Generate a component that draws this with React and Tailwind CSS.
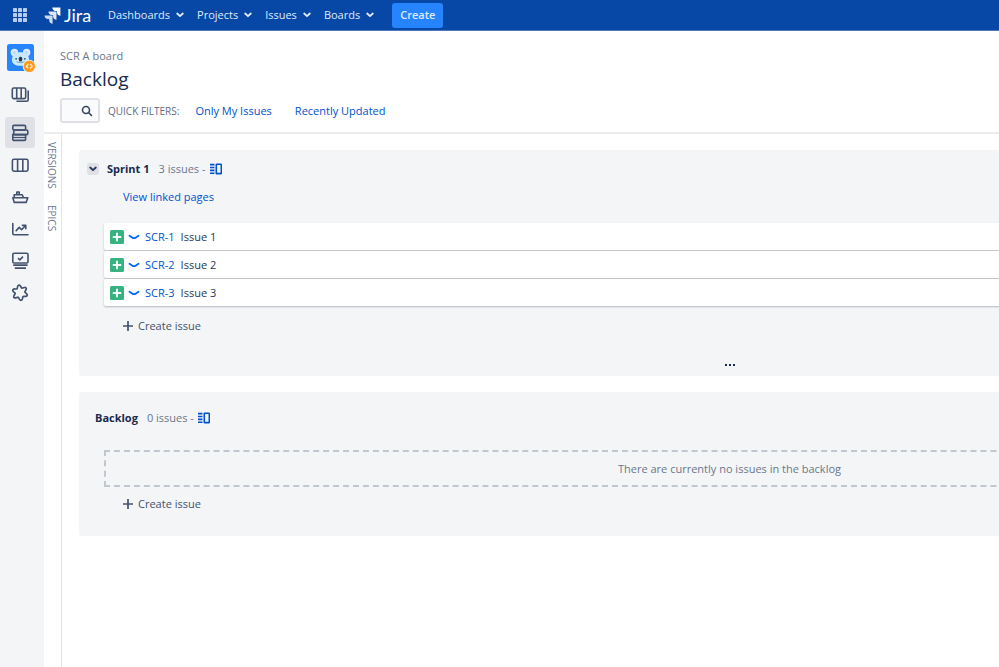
const navItems = ["Dashboards", "Projects", "Issues", "Boards"];

const issues = [
  { key: "SCR-1", title: "Issue 1" },
  { key: "SCR-2", title: "Issue 2" },
  { key: "SCR-3", title: "Issue 3" },
];

function Icon({ size = 20, className = "", children, ...rest }) {
  return (
    <svg
      width={size}
      height={size}
      viewBox={`0 0 ${size} ${size}`}
      fill="none"
      stroke="currentColor"
      aria-hidden="true"
      className={`shrink-0 ${className}`}
      {...rest}
    >
      {children}
    </svg>
  );
}

function AppSwitcherIcon() {
  return (
    <Icon size={16} stroke="none" fill="#b9cdf0">
      {[1, 6, 11].map((y) => [1, 6, 11].map((x) => <rect key={`${x}-${y}`} x={x} y={y} width="4" height="4" rx="0.4" />))}
    </Icon>
  );
}

function JiraMark() {
  return (
    <Icon size={17} stroke="none" fill="#ffffff">
      <path d="M8.3 0.5H16.4V8.7C14.5 8.7 13 7.2 13 5.4V4H11.6C9.8 4 8.3 2.4 8.3 0.5Z" />
      <path opacity="0.88" d="M4.4 4.5H12.5V12.7C10.6 12.7 9.1 11.2 9.1 9.4V8H7.7C5.9 8 4.4 6.4 4.4 4.5Z" />
      <path opacity="0.8" d="M0.5 8.5H8.6V16.7C6.7 16.7 5.2 15.2 5.2 13.4V12H3.8C2 12 0.5 10.4 0.5 8.5Z" />
    </Icon>
  );
}

function KoalaAvatar() {
  return (
    <Icon size={29} stroke="none">
      <rect x="0" y="0" width="27" height="27" rx="2.5" fill="#2684ff" />
      <circle cx="7.4" cy="8.4" r="3.7" fill="#deebff" />
      <circle cx="19.6" cy="8.4" r="3.7" fill="#deebff" />
      <circle cx="7.6" cy="8.8" r="1.7" fill="#b3dcf5" />
      <circle cx="19.4" cy="8.8" r="1.7" fill="#b3dcf5" />
      <path d="M5 15.8C5 10.5 8 8.2 13.5 8.2S22 10.5 22 15.8C22 19.8 19 21.8 13.5 21.8S5 19.8 5 15.8Z" fill="#c9e9f8" />
      <rect x="8.3" y="14" width="1.6" height="1.8" rx="0.8" fill="#253858" />
      <rect x="17.1" y="14" width="1.6" height="1.8" rx="0.8" fill="#253858" />
      <rect x="11.8" y="12.8" width="3.4" height="4.6" rx="1.5" fill="#253858" />
      <path d="M9.5 17.6C11 19 16 19 17.5 17.6" stroke="#6b8fb5" strokeWidth="0.8" />
      <circle cx="22.3" cy="22.3" r="6.6" fill="#f4f5f7" />
      <circle cx="22.3" cy="22.3" r="5.8" fill="#ff991f" />
      <path d="M21 20.4L19.4 22.3L21 24.2M23.6 20.4L25.2 22.3L23.6 24.2" stroke="#ffffff" strokeWidth="1.1" strokeLinecap="round" />
    </Icon>
  );
}

function AllBoardsIcon() {
  return (
    <Icon strokeWidth="1.6">
      <rect x="2.3" y="3" width="13.4" height="10.6" rx="1.5" />
      <path d="M6.7 3V13.6M11.2 3V13.6" />
      <path d="M18.2 6V14.7C18.2 15.6 17.6 16.2 16.7 16.2H7" strokeLinecap="round" />
    </Icon>
  );
}

function BacklogIcon() {
  return (
    <Icon strokeWidth="1.6">
      <rect x="2.8" y="2.4" width="12.8" height="4.6" rx="1.2" />
      <rect x="3.8" y="7" width="14" height="4.6" rx="1.2" />
      <path d="M2.8 11.6H15.6V16.2C15.6 16.9 15.1 17.4 14.4 17.4H4C3.3 17.4 2.8 16.9 2.8 16.2Z" />
      <path d="M3 14.5H15.5" strokeWidth="1.2" />
    </Icon>
  );
}

function BoardIcon() {
  return (
    <Icon strokeWidth="1.6">
      <rect x="2.4" y="4.2" width="15.6" height="12" rx="1.6" />
      <path d="M7.6 4.2V16.2M12.8 4.2V16.2" />
    </Icon>
  );
}

function ShipIcon() {
  return (
    <Icon strokeWidth="1.6" strokeLinejoin="round">
      <path d="M2.8 10.8H17.8L16.1 15.4H4.3Z" />
      <path d="M4.2 10.5V7.8H12.2L13.4 10.5M6.8 7.5V5H9.2V7.5" />
    </Icon>
  );
}

function ReportsIcon() {
  return (
    <Icon strokeWidth="1.6" strokeLinecap="round" strokeLinejoin="round">
      <path d="M2.8 4.6V14.4C2.8 15.2 3.3 15.7 4.1 15.7H18" />
      <path d="M6.2 11.6L9.2 8.4L11.6 10.7L15.4 6.8M12.4 6.4H15.8V9.8" />
    </Icon>
  );
}

function MonitorIcon() {
  return (
    <Icon strokeWidth="1.6">
      <rect x="2.8" y="2.2" width="15.2" height="9.8" rx="1.3" />
      <path d="M8 7.2L9.8 8.9L13 5.6" />
      <path d="M3.2 14.1H17.6M4.8 17.2H16" strokeWidth="1.8" />
    </Icon>
  );
}

// Six soft lobes around the centre, the first one just left of the top.
const addonOutline = Array.from({ length: 72 }, (_, i) => {
  const angle = (i * Math.PI) / 36;
  const radius = 6.3 + 1.4 * Math.cos(6 * (angle + 1.72));
  return `${(10 + radius * Math.cos(angle)).toFixed(2)},${(9.7 + radius * Math.sin(angle)).toFixed(2)}`;
}).join(" ");

function AddonIcon() {
  return (
    <Icon strokeWidth="1.7" strokeLinejoin="round">
      <polygon points={addonOutline} />
    </Icon>
  );
}

function ChevronDown({ className = "" }) {
  return (
    <Icon size={8} strokeWidth="1.8" strokeLinecap="round" strokeLinejoin="round" className={className}>
      <path d="M1.2 2.5L4 5.2L6.8 2.5" />
    </Icon>
  );
}

function PlusIcon() {
  return (
    <Icon size={10} strokeWidth="1.7">
      <path d="M5 0V10M0 5H10" />
    </Icon>
  );
}

function SplitIcon() {
  return (
    <Icon size={12} strokeWidth="1.6" className="text-[#0052cc]">
      <path d="M0 1.6H4.5M0 4.5H4.5M0 7.4H4.5M0 10.3H4.5" />
      <rect x="6.3" y="1.3" width="5" height="9.3" rx="0.4" />
    </Icon>
  );
}

const sidebarLinks = [
  { label: "Backlog", icon: BacklogIcon, active: true },
  { label: "Active sprints", icon: BoardIcon },
  { label: "Releases", icon: ShipIcon },
  { label: "Reports", icon: ReportsIcon },
  { label: "Issues", icon: MonitorIcon },
  { label: "Add-ons", icon: AddonIcon },
];

function TopBar() {
  return (
    <header className="flex h-[31px] shrink-0 items-center border-b border-[#5078b8] bg-[#0747a6] text-[#deebff]">
      <button aria-label="App switcher" className="ml-3 mr-4">
        <AppSwitcherIcon />
      </button>
      <a href="#home" className="flex items-center gap-[3px] text-white">
        <JiraMark />
        <span className="w-7 font-[Lato] text-lg leading-5">Jira</span>
      </a>
      <nav className="ml-4 flex items-center gap-[13px]">
        {navItems.map((item) => (
          <button key={item} className="flex items-center gap-[6px] whitespace-nowrap">
            {item}
            <ChevronDown />
          </button>
        ))}
      </nav>
      <button className="ml-[18px] h-[25px] rounded-[3px] bg-[#2684ff] px-2 font-semibold">Create</button>
    </header>
  );
}

function Sidebar() {
  return (
    <aside className="flex w-11 shrink-0 flex-col bg-[#f4f5f7] pt-[13px] text-[#42526e]">
      <a href="#project" aria-label="Project" className="ml-[7px]">
        <KoalaAvatar />
      </a>
      <button aria-label="Board list" className="mt-3 flex justify-center pr-1">
        <AllBoardsIcon />
      </button>
      <nav className="mt-3 flex flex-col gap-px px-[5px]">
        {sidebarLinks.map(({ label, icon: Glyph, active }) => (
          <a
            key={label}
            href="#nav"
            aria-label={label}
            className={`flex h-[31px] w-[30px] items-center justify-center rounded-[3px] ${active ? "bg-[#dfe1e6]" : ""}`}
          >
            <Glyph />
          </a>
        ))}
      </nav>
    </aside>
  );
}

function CreateIssue() {
  return (
    <button className="flex items-center gap-[5px] leading-4 text-[#42526e]">
      <PlusIcon />
      Create issue
    </button>
  );
}

function SprintPanel() {
  return (
    <section className="rounded-[3px] bg-[#f4f5f7] pb-[3px] pt-[11px]">
      <div className="flex items-center pl-2">
        <button aria-label="Collapse sprint" className="flex size-3 items-center justify-center rounded-[3px] bg-[#dfe1e6] text-[#253858]">
          <ChevronDown />
        </button>
        <h2 className="ml-2 font-bold text-[#172b4d]">Sprint 1</h2>
        <span className="ml-[9px] mr-1 text-[#6b778c]">3 issues -</span>
        <SplitIcon />
      </div>
      <a href="#pages" className="ml-11 mt-3 inline-block leading-4 text-[#0052cc]">
        View linked pages
      </a>
      <ul className="mx-[25px] mt-[18px] flex flex-col gap-px">
        {issues.map((issue) => (
          <li key={issue.key} className="flex h-[27px] items-center rounded-[2px] bg-white pl-[6px] shadow-[0_1px_2px_rgba(9,30,66,0.28)]">
            <Icon size={14} stroke="none">
              <rect width="14" height="14" rx="1.5" fill="#36b37e" />
              <path d="M7 2.8V11.2M2.8 7H11.2" stroke="#ffffff" strokeWidth="1.8" />
            </Icon>
            <Icon size={12} strokeWidth="1.8" strokeLinecap="round" className="ml-1 text-[#0065ff]">
              <path d="M1.5 4.8L4.8 6.9Q6 7.5 7.2 6.9L10.5 4.8" />
            </Icon>
            <a href="#issue" className="ml-[5px] text-[#0052cc]">
              {issue.key}
            </a>
            <span className="ml-[6px] text-[#253858]">{issue.title}</span>
          </li>
        ))}
      </ul>
      <div className="ml-11 mt-3">
        <CreateIssue />
      </div>
      <div className="mt-[23px] flex h-4 items-center justify-center">
        <button aria-label="More">
          <Icon size={12} stroke="none" fill="#172b4d">
            <rect x="1" y="5" width="2" height="2" />
            <rect x="5" y="5" width="2" height="2" />
            <rect x="9" y="5" width="2" height="2" />
          </Icon>
        </button>
      </div>
    </section>
  );
}

function BacklogPanel() {
  return (
    <section className="rounded-[3px] bg-[#f4f5f7] pb-6 pt-[18px]">
      <div className="flex items-center pl-4">
        <h2 className="font-bold text-[#172b4d]">Backlog</h2>
        <span className="ml-[9px] mr-1 text-[#6b778c]">0 issues -</span>
        <SplitIcon />
      </div>
      <div className="mx-[25px] mt-6 flex h-[37px] items-center justify-center border-2 border-dashed border-[#c1c7d0] text-[#6b778c]">
        There are currently no issues in the backlog
      </div>
      <div className="ml-11 mt-[9px]">
        <CreateIssue />
      </div>
    </section>
  );
}

export default function App() {
  return (
    <div className="flex h-screen flex-col overflow-hidden bg-white font-['Open_Sans','Noto_Sans',sans-serif] text-[11px] leading-4">
      <TopBar />
      <div className="flex min-h-0 flex-1">
        <Sidebar />
        <div className="flex min-w-0 flex-1 flex-col">
          <div className="border-b-2 border-[#ebecf0] pb-[9px] pl-4 pt-[17px]">
            <div className="leading-4 text-[#6b778c]">SCR A board</div>
            <h1 className="mt-[3px] text-[19px] leading-6 text-[#172b4d]">Backlog</h1>
            <div className="mt-[7px] flex h-[25px] items-center">
              <label className="flex h-[25px] w-10 items-center rounded-[3px] border-2 border-[#dfe1e6] bg-[#fafbfc] text-[#344563]">
                <input aria-label="Search backlog" className="h-full min-w-0 flex-1 bg-transparent outline-none" />
                <Icon size={12} strokeWidth="1.6" strokeLinecap="round" className="mr-[5px]">
                  <circle cx="5" cy="5" r="3.5" />
                  <path d="M7.7 7.7L10.5 10.5" />
                </Icon>
              </label>
              <span className="ml-2 text-[10px] font-medium text-[#5e6c84]">QUICK FILTERS:</span>
              <a href="#mine" className="ml-4 text-[#0052cc]">
                Only My Issues
              </a>
              <a href="#recent" className="ml-[23px] text-[#0052cc]">
                Recently Updated
              </a>
            </div>
          </div>
          <div className="flex min-h-0 flex-1">
            <div className="flex w-[18px] shrink-0 flex-col gap-4 border-r border-[#dfe1e6] pt-2 text-[10px] text-[#6b778c]">
              <button className="w-4 [writing-mode:vertical-rl]">VERSIONS</button>
              <button className="w-4 [writing-mode:vertical-rl]">EPICS</button>
            </div>
            <main className="min-w-0 flex-1 overflow-hidden pl-[17px] pt-4">
              <div className="flex min-w-[1301px] flex-col gap-4">
                <SprintPanel />
                <BacklogPanel />
              </div>
            </main>
          </div>
        </div>
      </div>
    </div>
  );
}
